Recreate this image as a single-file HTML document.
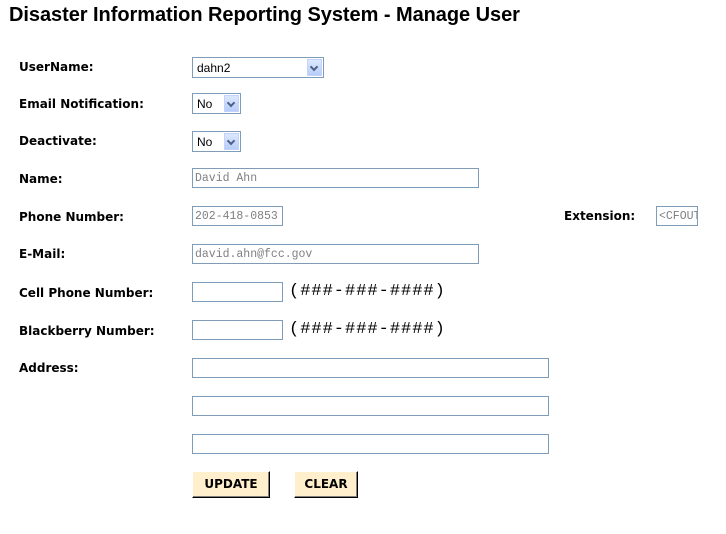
<!DOCTYPE html>
<html><head><meta charset="utf-8"><style>
body{margin:0;width:726px;height:534px;background:#fff;position:relative;overflow:hidden;font-family:"DejaVu Sans",Verdana,sans-serif}
.t{position:absolute;left:9px;top:4px;font:bold 20px "Liberation Sans",Arial,sans-serif;color:#000;white-space:nowrap;letter-spacing:-0.05px}
.l{position:absolute;left:19px;font-weight:bold;font-size:12px;color:#000;white-space:nowrap}
.b{position:absolute;box-sizing:border-box;border:1px solid #7f9db9;background:#fff;height:20px;font:11.5px "Liberation Mono",monospace;color:#808080;padding:3px 2px;white-space:nowrap;overflow:hidden}
.s{position:absolute;box-sizing:border-box;border:1px solid #7f9db9;background:#fff;height:21px;font:12px "Liberation Sans",Arial,sans-serif;color:#000;padding:3px 4px}
.s i{position:absolute;right:1px;top:1px;width:15px;height:17px;background:linear-gradient(#dce8fd,#b7cdf9);border:1px solid #c3d3fd;box-sizing:border-box}
.s i:after{content:"";position:absolute;left:3px;top:4px;width:4px;height:4px;border-right:2px solid #4d6185;border-bottom:2px solid #4d6185;transform:rotate(45deg)}
.h{position:absolute;left:289px;font:17px "Liberation Mono",monospace;color:#000;letter-spacing:1px}
.btn{position:absolute;top:471px;height:27px;box-sizing:border-box;background:#ffefcc;border:1px solid;border-color:#fff #000 #000 #fff;box-shadow:inset -1px -1px #808080;font:bold 12px "DejaVu Sans",Verdana,sans-serif;text-align:center;line-height:25px}
</style></head><body>
<div class="t">Disaster Information Reporting System - Manage User</div>
<div class="l" style="top:60px">UserName:</div>
<div class="s" style="left:192px;top:57px;width:132px">dahn2<i></i></div>
<div class="l" style="top:97px">Email Notification:</div>
<div class="s" style="left:192px;top:93px;width:49px">No<i></i></div>
<div class="l" style="top:134px">Deactivate:</div>
<div class="s" style="left:192px;top:131px;width:49px">No<i></i></div>
<div class="l" style="top:172px">Name:</div>
<div class="b" style="left:192px;top:168px;width:287px">David Ahn</div>
<div class="l" style="top:210px">Phone Number:</div>
<div class="b" style="left:192px;top:206px;width:91px">202-418-0853</div>
<div class="l" style="left:564px;top:209px">Extension:</div>
<div class="b" style="left:656px;top:206px;width:42px">&lt;CFOUT</div>
<div class="l" style="top:247px">E-Mail:</div>
<div class="b" style="left:192px;top:244px;width:287px">david.ahn@fcc.gov</div>
<div class="l" style="top:286px">Cell Phone Number:</div>
<div class="b" style="left:192px;top:282px;width:91px"></div>
<div class="h" style="top:282px">(###-###-####)</div>
<div class="l" style="top:324px">Blackberry Number:</div>
<div class="b" style="left:192px;top:320px;width:91px"></div>
<div class="h" style="top:320px">(###-###-####)</div>
<div class="l" style="top:361px">Address:</div>
<div class="b" style="left:192px;top:358px;width:357px"></div>
<div class="b" style="left:192px;top:396px;width:357px"></div>
<div class="b" style="left:192px;top:434px;width:357px"></div>
<div class="btn" style="left:192px;width:78px">UPDATE</div>
<div class="btn" style="left:294px;width:64px">CLEAR</div>
</body></html>
